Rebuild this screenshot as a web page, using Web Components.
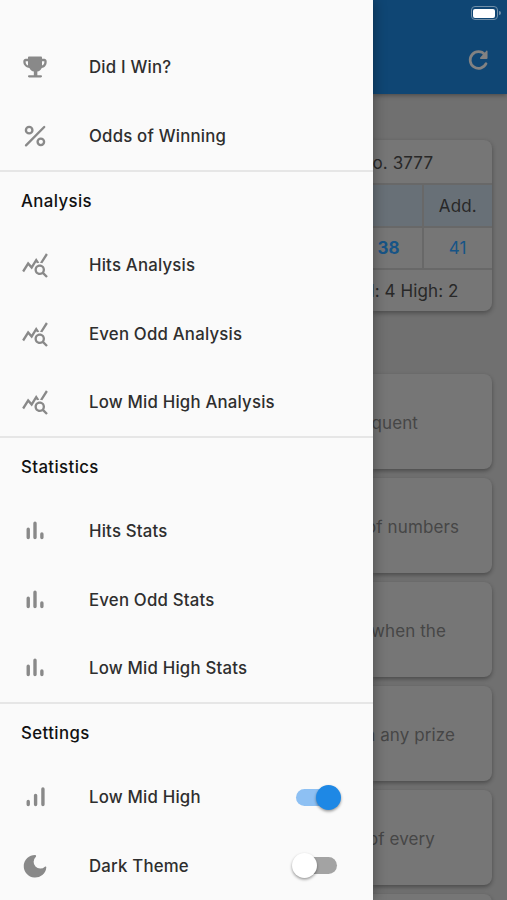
<!DOCTYPE html>
<html lang="en"><head><meta charset="utf-8"><title>Lottery menu</title>
<style>
html,body{margin:0;height:900px;overflow:hidden;background:#707070}
body{font-family:Inter,"Noto Sans",sans-serif}
</style></head><body>
<app-screen></app-screen>
<script>
const define=(name,html,setup)=>customElements.define(name,class extends HTMLElement{
  connectedCallback(){
    if(this.shadowRoot)return;
    const t=document.createElement('template');t.innerHTML=html;
    this.attachShadow({mode:'open'}).append(t.content.cloneNode(true));
    if(setup)setup(this,this.shadowRoot);
  }
});
const icons={
trophy:'<path fill="currentColor" d="M7 3h10c.6 0 1 .4 1 1v1h2c1.1 0 2 .9 2 2v1c0 2.600-1.900 4.700-4.400 5-.6 1.500-2 2.600-3.600 2.900V19h3c.6 0 1 .4 1 1s-.4 1-1 1H7c-.6 0-1-.4-1-1s.4-1 1-1h4v-3.100c-1.600-.3-3-1.400-3.600-2.900C4.900 12.700 2 10.600 2 8V7c0-1.100.9-2 2-2h2V4c0-.6.4-1 1-1zM4 7v1c0 1.300.8 2.400 2 2.800V7zm14 0v3.800c1.200-.4 2-1.500 2-2.800V7z"/>',
percent:'<g fill="none" stroke="currentColor" stroke-width="2" stroke-linecap="round"><circle cx="7" cy="7" r="2.800"/><circle cx="17" cy="17" r="2.800"/><path d="M4.300 20 19.900 4.300"/></g>',
query:'<path fill="currentColor" d="M19.880 18.470c.44-.7.7-1.510.7-2.390 0-2.490-2.010-4.500-4.500-4.500s-4.500 2.010-4.500 4.500 2.010 4.500 4.490 4.500c.88 0 1.700-.26 2.390-.7L21.580 23 23 21.580zm-3.800.11a2.500 2.500 0 1 1 0-5 2.500 2.500 0 0 1 0 5zm-.36-8.500c-.74.020-1.450.18-2.100.45l-.55-.83-3.800 6.180-3.010-3.520-3.630 5.810L1 17l5-8 3 3.500L13 6zm2.590.5c-.64-.28-1.330-.45-2.050-.49L21.380 2 23 3.180z"/>',
bars:'<g fill="none" stroke="currentColor" stroke-width="2.900" stroke-linecap="round"><path d="M6.200 10.400v7.200M12 5.400v12.200M17.900 14.600v3"/></g>',
signal:'<g fill="none" stroke="currentColor" stroke-width="2.900" stroke-linecap="round"><path d="M6.200 15.800v2.700M12.500 10.600v7.900M18.800 5.100v13.400"/></g>',
moon:'<path fill="currentColor" d="M12.100 2.500A9.700 9.700 0 1 0 21.700 13.200c.1-.8-.6-1-1.200-.6A5.700 5.700 0 0 1 12.600 4.300c.6-.8.400-1.800-.5-1.800z"/>',
reload:'<path fill="none" stroke="currentColor" stroke-width="2.500" stroke-linecap="round" d="M19.400 15.400A7.700 7.700 0 1 1 18.300 7"/><path fill="currentColor" d="M20.800 4v6.200c0 .6-.3.900-.9.900h-5.300c-.8 0-1-.8-.5-1.300l5.500-6.200c.5-.5 1.200-.3 1.200.4z"/>'
};
define('app-icon','<style>:host{display:block;width:28px;height:28px}svg{display:block;width:100%;height:100%}</style>',(h,r)=>{
  r.innerHTML+=`<svg viewBox="0 0 24 24">${icons[h.getAttribute('name')]}</svg>`;
});
define('menu-row',`<style>:host{display:flex;box-sizing:border-box;height:68.5px;align-items:center;padding:1px 31.500px 0 21px;color:#2e2e2e;font-size:16.800px;font-weight:500;letter-spacing:.2px}
app-icon{color:#898989;margin-right:40px}.label{flex:1;white-space:nowrap}</style><app-icon></app-icon><span class="label"><slot></slot></span><slot name="end"></slot>`,
(h,r)=>{const i=document.createElement('app-icon');i.setAttribute('name',h.getAttribute('icon'));r.querySelector('app-icon').replaceWith(i)});
define('menu-section',`<style>:host{display:block}h2{box-sizing:border-box;margin:0;height:60.700px;border-top:2px solid #e6e6e6;padding-left:21px;display:flex;align-items:center;color:#111;font-size:16.800px;font-weight:500;letter-spacing:.4px}</style><h2></h2><slot></slot>`,
(h,r)=>{r.querySelector('h2').textContent=h.getAttribute('heading')});
define('toggle-switch',`<style>:host{display:flex;align-items:center;box-sizing:border-box;width:49px;height:28px;padding:0 3px 0 4px}
.track{display:flex;align-items:center;width:41px;height:17px;border-radius:9px;background:#a3a3a3}
.knob{flex:none;width:25px;height:25px;border-radius:50%;background:#fff;margin-left:-4px;box-shadow:0 1.500px 3px #0006}
:host([on]) .track{background:#8dc0f3;justify-content:flex-end}:host([on]) .knob{background:#1e88e5;margin-right:-4px}</style><div class="track"><div class="knob"></div></div>`);
define('nav-drawer',`<style>:host{display:block;box-sizing:border-box;width:372.500px;height:900px;padding-top:32.600px;background:#fafafa;box-shadow:1px 0 12px #0005;z-index:2;overflow:hidden;flex:none}</style><slot></slot>`);
define('top-bar',`<style>:host{display:flex;flex-direction:column;box-sizing:border-box;height:94px;background:#0f4674;align-items:flex-end;padding:6px 0 0;box-shadow:0 1px 5px #0006}
.battery{display:flex;align-items:center;margin-right:6.500px}.cell{box-sizing:border-box;width:27px;height:14px;border:1px solid #718fa8;border-radius:4px;padding:1.500px}.cell:before{content:"";display:block;height:9px;border-radius:2px;background:#fff}.tip{width:2px;height:4px;border-radius:0 2px 2px 0;background:#718fa8;margin-left:1px}
app-icon{color:#828282;width:26px;height:26px;margin:27px 16px 0 0}</style><div class="battery"><div class="cell"></div><div class="tip"></div></div><app-icon name="reload"></app-icon>`);
define('draw-card',`<style>:host{display:grid;grid-template-columns:51px 68.500px;grid-template-rows:43px 43px 42px 43px;width:119.500px;height:171px;margin-top:46px;background:#767676;border-radius:0 8px 8px 0;box-shadow:0 2px 5px #0005;color:#282828;font-size:17px;letter-spacing:.1px}
div{display:flex;align-items:center;white-space:nowrap;box-sizing:border-box;border-top:2px solid #686868}.wide{grid-column:1/3}.head{border:0;padding-top:2px}.tint{background:#687077}.edge{border-right:2px solid #686868}.num{color:#175486}.center{justify-content:center}b{font-weight:700;margin-left:5px}.sum{justify-content:flex-end;padding-right:33.500px}</style>
<div class="wide head"><span>o. 3777</span></div><div class="tint edge"></div><div class="tint center">Add.</div><div class="edge num"><b>38</b></div><div class="num center">41</div><div class="wide sum"><span>l: 4 High: 2</span></div>`);
define('info-card',`<style>:host{display:flex;align-items:center;justify-content:flex-end;box-sizing:border-box;flex:none;width:119.500px;height:95px;background:#767676;border-radius:0 8px 8px 0;box-shadow:0 2px 4px #0005;color:#464646;font-size:17px;letter-spacing:.1px;white-space:nowrap;padding-right:var(--end,0)}span{padding-top:3px}</style><span><slot></slot></span>`);
define('app-screen',`<style>:host{display:flex;width:507px;height:900px;overflow:hidden}
main{flex:1;min-width:0;height:900px;background:#707070}.cards{display:flex;flex-direction:column;gap:9px;margin-top:63px}</style>
<nav-drawer><menu-row icon="trophy">Did I Win?</menu-row><menu-row icon="percent">Odds of Winning</menu-row>
<menu-section heading="Analysis"><menu-row icon="query">Hits Analysis</menu-row><menu-row icon="query">Even Odd Analysis</menu-row><menu-row icon="query">Low Mid High Analysis</menu-row></menu-section>
<menu-section heading="Statistics"><menu-row icon="bars">Hits Stats</menu-row><menu-row icon="bars">Even Odd Stats</menu-row><menu-row icon="bars">Low Mid High Stats</menu-row></menu-section>
<menu-section heading="Settings"><menu-row icon="signal">Low Mid High<toggle-switch slot="end" on></toggle-switch></menu-row><menu-row icon="moon">Dark Theme<toggle-switch slot="end"></toggle-switch></menu-row></menu-section></nav-drawer>
<main><top-bar></top-bar><draw-card></draw-card><div class="cards"><info-card style="--end:74px">quent</info-card><info-card style="--end:33px">of numbers</info-card><info-card style="--end:46px">when the</info-card><info-card style="--end:37px">n any prize</info-card><info-card style="--end:57px">of every</info-card><info-card></info-card></div></main>`);
</script></body></html>
